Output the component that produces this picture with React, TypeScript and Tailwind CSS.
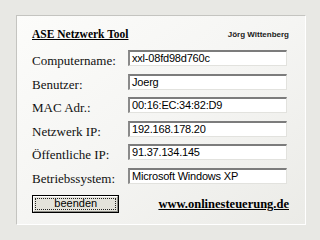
const rows = [
  { label: "Computername:", value: "xxl-08fd98d760c" },
  { label: "Benutzer:", value: "Joerg" },
  { label: "MAC Adr.:", value: "00:16:EC:34:82:D9" },
  { label: "Netzwerk IP:", value: "192.168.178.20" },
  { label: "Öffentliche IP:", value: "91.37.134.145" },
  { label: "Betriebssystem:", value: "Microsoft Windows XP" },
];

export default function App() {
  return (
    <div className="w-[320px] h-[240px] bg-[#e8e8e4] pt-[15px] pl-[16px] overflow-hidden">
      {/* main panel */}
      <div className="w-[290px] h-[210px] border border-t-[#c4c4c0] border-l-[#c4c4c0] border-r-white border-b-white bg-gradient-to-br from-[#fcfcfa] via-[#f5f5f3] to-[#ebebe7] pl-[15px] pr-[16px] pt-[10px]">
        {/* header */}
        <div className="flex items-end justify-between h-[14px]">
          <span className="font-['Liberation_Serif',serif] font-bold text-[11.5px] leading-none underline text-black">
            ASE Netzwerk Tool
          </span>
          <span className="font-['Liberation_Sans',sans-serif] font-bold text-[8px] leading-none text-[#1a1a1a] mb-[1px]">
            Jörg Wittenberg
          </span>
        </div>

        {/* info rows */}
        <div className="mt-[10px] flex flex-col gap-[7.5px]">
          {rows.map((r) => (
            <div key={r.label} className="flex items-end h-[16px]">
              <span className="w-[96px] font-['Liberation_Serif',serif] text-[13px] leading-none text-[#111] mb-[-1px]">
                {r.label}
              </span>
              <div className="w-[159px] h-[16px] bg-white border-t-2 border-l-2 border-r border-b border-t-[#7c7c7c] border-l-[#8a8a8a] border-r-[#e2e2de] border-b-[#e2e2de] pl-[2px] flex items-center">
                <span className="font-['Liberation_Sans',sans-serif] text-[11px] leading-none text-black tracking-[-0.2px]">
                  {r.value}
                </span>
              </div>
            </div>
          ))}
        </div>

        {/* footer */}
        <div className="mt-[11px] flex items-center">
          <button className="w-[88px] h-[18px] border border-black bg-[#e4e3db] p-0">
            <div className="w-full h-full border-t border-l border-t-white border-l-white border-b border-r border-b-[#8e8e88] border-r-[#8e8e88] p-[1px]">
              <div className="w-full h-full border border-dotted border-[#222] flex items-end justify-center">
                <span className="font-['Liberation_Sans',sans-serif] text-[11px] leading-[11px] text-black">
                  beenden
                </span>
              </div>
            </div>
          </button>
          <span className="ml-[39px] mt-[2px] font-['Liberation_Serif',serif] font-bold text-[12.5px] leading-none underline text-black">
            www.onlinesteuerung.de
          </span>
        </div>
      </div>
    </div>
  );
}
